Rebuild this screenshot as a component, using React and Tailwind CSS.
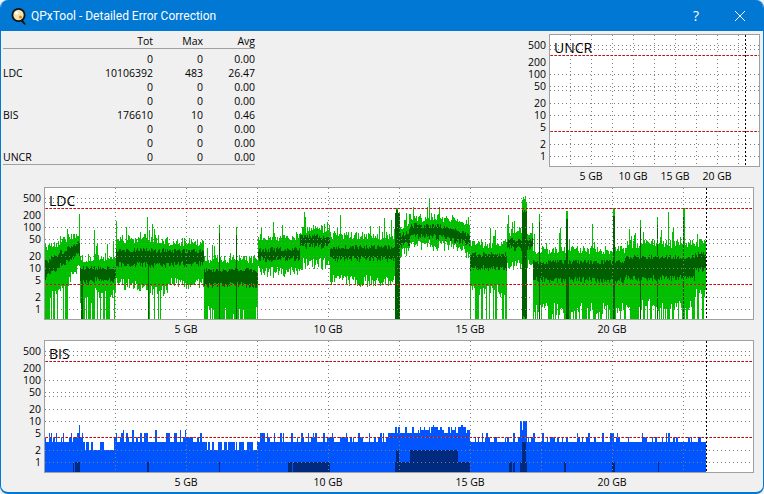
import React from "react";

const FONT = "font-['Open_Sans','Noto_Sans',sans-serif]";
const rng = (seed) => () => {
  seed |= 0; seed = (seed + 0x6d2b79f5) | 0;
  let t = Math.imul(seed ^ (seed >>> 15), 1 | seed);
  t = (t + Math.imul(t ^ (t >>> 7), 61 | t)) ^ t;
  return ((t ^ (t >>> 14)) >>> 0) / 4294967296;
};
const rel = (v) => 122 - 41 * Math.log10(v);
const H_LINES = [500, 400, 100, 50, 40, 20, 10, 2, 1].map((v) => Math.round(rel(v)));
const RED_LINES = [21, 97];
const TICKS = [500, 200, 100, 50, 20, 10, 5, 2, 1];

// x0,x1, lightTop a/b, darkTop a/b, darkBot a/b, lightBot a/b, deep probability
const GREEN = [
  [45, 68, 248, 238, 262, 248, 277, 260, 296, 280, 0.55],
  [68, 80, 238, 231, 248, 241, 260, 253, 280, 268, 0.0],
  [80, 95, 258, 258, 268, 268, 282, 282, 300, 300, 0.7],
  [95, 116, 257, 257, 268, 268, 280, 280, 294, 294, 0.45],
  [116, 147, 240, 238, 250, 250, 265, 264, 284, 286, 0.03],
  [147, 168, 238, 241, 250, 251, 265, 266, 290, 290, 0.1],
  [168, 204, 242, 242, 251, 251, 264, 264, 284, 284, 0],
  [204, 258, 259, 259, 270, 270, 285, 285, 310, 310, 0.75],
  [258, 300, 238, 236, 250, 249, 260, 259, 272, 272, 0],
  [300, 330, 230, 228, 237, 236, 246, 246, 264, 264, 0],
  [330, 395, 236, 236, 247, 247, 259, 259, 281, 281, 0.02],
  [395, 400, 212, 212, 212, 212, 319, 319, 319, 319, 1],
  [400, 410, 226, 222, 235, 231, 246, 243, 254, 250, 0],
  [410, 450, 218, 217, 225, 227, 236, 238, 244, 247, 0],
  [450, 470, 219, 226, 228, 235, 240, 244, 247, 255, 0],
  [470, 507, 244, 244, 254, 254, 268, 268, 291, 291, 0.4],
  [507, 522, 232, 232, 240, 240, 248, 248, 265, 265, 0],
  [522, 527, 200, 200, 212, 212, 319, 319, 319, 319, 1],
  [527, 533, 232, 232, 240, 240, 248, 248, 262, 262, 0],
  [533, 625, 250, 250, 262, 262, 280, 280, 309, 309, 0.5],
  [625, 695, 244, 244, 257, 257, 278, 278, 305, 305, 0.4],
  [695, 706, 243, 243, 254, 254, 270, 270, 295, 295, 0.2],
];
const SPIKES = [
  [60, 236], [79, 214], [94, 230], [147, 217], [219, 225], [236, 227], [340, 215], [384, 218],
  [508, 215], [539, 214], [566, 211], [567, 211], [613, 208], [614, 208], [640, 220], [657, 217],
  [668, 212], [683, 208], [684, 208], [672, 232], [690, 240], [560, 228], [592, 224],
];
const DARK_COLS = [81, 82, 148, 219, 236, 539, 566, 567, 568, 613, 614, 640, 657, 683];

function greenPaths() {
  const r = rng(7);
  const lerp = (a, b, t) => a + (b - a) * t;
  let light = "", dark = "";
  const sp = new Map(SPIKES);
  for (const s of GREEN) {
    for (let x = s[0]; x < s[1]; x++) {
      const t = (x - s[0]) / (s[1] - s[0]);
      let lt = lerp(s[2], s[3], t) + (r() - 0.5) * 9 - 187;
      const dt = lerp(s[4], s[5], t) + (r() - 0.5) * 5 - 187;
      const db = lerp(s[6], s[7], t) + (r() - 0.5) * 6 - 187;
      let lb = lerp(s[8], s[9], t) + (r() - 0.5) * 12 - 187;
      if (r() < s[10]) lb = 132;
      if (sp.has(x)) lt = sp.get(x) - 187;
      else if (r() < 0.08 && s[10] < 1) lt -= 4 + r() * 12;
      light += `M${x + 0.5} ${lt.toFixed(0)}V${lb.toFixed(0)}`;
      const dk = DARK_COLS.includes(x);
      dark += `M${x + 0.5} ${(dk && sp.has(x) ? lt + 8 : dt).toFixed(0)}V${(dk ? 132 : db).toFixed(0)}`;
    }
  }
  return { light, dark };
}

const BLUE = [
  [45, 84, 3, 0.45, [4, 4, 5]], [84, 114, 2, 0.45, [3]], [114, 205, 3, 0.48, [4, 4, 5, 5, 6]],
  [205, 258, 2, 0.5, [3]], [258, 395, 3, 0.45, [4, 4, 5, 5]], [395, 470, 5, 0.6, [6, 6, 7, 7, 8]],
  [470, 520, 3, 0.35, [4, 4, 5]], [520, 527, 6, 0.6, [8, 10]], [527, 706, 3, 0.38, [3, 4, 4, 4, 5]],
];
const NAVY = [
  [73, 74, 1], [75, 80, 1], [147, 149, 1], [219, 220, 1], [288, 292, 1], [293, 330, 1], [395, 470, 1],
  [396, 399, 2], [410, 458, 2], [509, 512, 1], [513, 515, 1], [520, 527, 1], [522, 526, 3], [564, 566, 1], [612, 615, 1], [658, 659, 1],
];
function bluePaths() {
  const r = rng(21);
  let blue = "", navy = "";
  let x = 45;
  const peak = { 79: 8 };
  for (const s of BLUE) {
    x = s[0];
    while (x < s[1]) {
      const w = 1 + Math.floor(r() * 2);
      let v = s[2];
      if (r() < s[3]) v = s[4][Math.floor(r() * s[4].length)];
      for (let i = 0; i < w && x < s[1]; i++, x++) {
        const val = peak[x] || v;
        blue += `M${x + 0.5} ${Math.round(rel(val))}V132`;
      }
    }
  }
  for (const n of NAVY) {
    for (let i = n[0]; i < n[1]; i++) navy += `M${i + 0.5} ${Math.round(rel(n[2]))}V132`;
  }
  return { blue, navy };
}
const G = greenPaths();
const B = bluePaths();

function Grid({ vx, black, x0, w }) {
  const x1 = x0 + w;
  return (
    <g shapeRendering="crispEdges" fill="none">
      {vx.map((x) => <path key={x} d={`M${x + 0.5} 1V132`} stroke="#808080" strokeDasharray="1 3" />)}
      {H_LINES.map((y) => <path key={y} d={`M${x0} ${y + 0.5}H${x1}`} stroke="#808080" strokeDasharray="1 3" />)}
      {RED_LINES.map((y) => (
        <g key={y}>
          <path d={`M${x0} ${y + 0.5}H${x1}`} stroke="#808080" strokeDasharray="1 3" />
          <path d={`M${x0 + 1} ${y + 0.5}H${x1}`} stroke="#e80000" strokeDasharray="2 2" />
        </g>
      ))}
      <path d={`M${black + 0.5} 1V132`} stroke="#000" strokeDasharray="2 2" />
    </g>
  );
}

function YAxis({ width }) {
  return (
    <div className="relative h-[133px] shrink-0 text-[10.5px] leading-[11px] text-black" style={{ width }}>
      {TICKS.map((v) => (
        <span key={v} className="absolute right-[3px]" style={{ top: Math.round(rel(v)) - 5 }}>{v}</span>
      ))}
    </div>
  );
}

function XAxis({ labels, step, pad }) {
  return (
    <div className="flex h-[20px] items-center text-[10.5px] text-black" style={{ paddingLeft: pad }}>
      {labels.map((l) => (
        <span key={l} className="text-center" style={{ width: step }}>{l}</span>
      ))}
    </div>
  );
}

function Chart({ title, x0, w, vx, black, children }) {
  return (
    <div className="relative h-[133px] border border-[#a0a0a0] bg-white" style={{ width: w + 2 }}>
      <svg width={w} height={131} viewBox={`${x0} 1 ${w} 131`} className="block">
        {children}
        <Grid vx={vx} black={black} x0={x0} w={w} />
      </svg>
      <span className="absolute left-[4px] top-[3px] text-[14px] leading-[20px] text-black">{title}</span>
    </div>
  );
}

const ROWS = [
  ["", "0", "0", "0.00"], ["LDC", "10106392", "483", "26.47"], ["", "0", "0", "0.00"], ["", "0", "0", "0.00"],
  ["BIS", "176610", "10", "0.46"], ["", "0", "0", "0.00"], ["", "0", "0", "0.00"], ["UNCR", "0", "0", "0.00"],
];
const COLS = "grid grid-cols-[50px_100px_50px_52px] h-[14px] items-center leading-[14px]";

function Stats() {
  return (
    <div className="w-[252px] text-[10.5px] text-black">
      <div className={`${COLS} mt-[3px] text-right`}>
        <span /><span>Tot</span><span>Max</span><span>Avg</span>
      </div>
      <div className="h-[1px] bg-[#a0a0a0]" />
      <div className="pt-[3px]">
        {ROWS.map((r, i) => (
          <div key={i} className={COLS}>
            <span>{r[0]}</span>
            <span className="text-right">{r[1]}</span>
            <span className="text-right">{r[2]}</span>
            <span className="text-right">{r[3]}</span>
          </div>
        ))}
      </div>
      <div className="h-[1px] bg-[#a0a0a0]" />
    </div>
  );
}

const VX_MAIN = [115, 186, 257, 328, 399, 470, 541, 612, 683];
const VX_UNCR = [570, 591, 612, 633, 654, 675, 696, 717, 738];
const GB_MAIN = ["5 GB", "10 GB", "15 GB", "20 GB"];

export default function App() {
  return (
    <div className={`h-[494px] w-[764px] overflow-hidden bg-[#eef1f4] ${FONT}`}>
      <div className="flex h-full flex-col overflow-hidden rounded-[8px] border-x-[1px] border-b-[2px] border-[#0078d4] bg-[#f0f0f0]">
        <div className="flex h-[31px] shrink-0 items-center bg-[#0078d4] pl-[9px] text-white">
          <svg width="18" height="18" viewBox="0 0 18 18" className="shrink-0">
            <path d="M11 14l3 3.5h2L13 13z" fill="#111" />
            <circle cx="8.5" cy="8" r="7" fill="#111" />
            <circle cx="8.5" cy="8" r="5.2" fill="#f3e3b0" />
            <circle cx="6.6" cy="6" r="1.7" fill="#fff" />
            <circle cx="10.5" cy="10" r="1.6" fill="#d09030" />
          </svg>
          <span className="ml-[3px] font-['Roboto',sans-serif] text-[12px]">QPxTool - Detailed Error Correction</span>
          <span className="ml-auto text-[14px]">?</span>
          <svg width="12" height="12" viewBox="0 0 12 12" className="ml-[35px] mr-[17px]" stroke="#fff" fill="none">
            <path d="M1 1l10 10M11 1L1 11" />
          </svg>
        </div>

        <div className="flex items-start justify-between pl-[2px] pr-[3px] pt-[3px]">
          <div className="-mt-[3px]"><Stats /></div>
          <div>
            <div className="flex">
              <YAxis width={30} />
              <Chart title="UNCR" x0={550} w={209} vx={VX_UNCR} black={745} />
            </div>
            <div className="pl-[30px]">
              <XAxis labels={GB_MAIN} step={42} pad={21} />
            </div>
          </div>
        </div>

        <div className="ml-[1px] flex flex-col">
          <div className="flex">
            <YAxis width={42} />
            <Chart title="LDC" x0={45} w={708} vx={VX_MAIN} black={706}>
              <g shapeRendering="crispEdges" fill="none">
                <path d={G.light} stroke="#00c000" />
                <path d={G.dark} stroke="#006000" />
              </g>
            </Chart>
          </div>
          <div className="pl-[42px]"><XAxis labels={GB_MAIN} step={142} pad={71} /></div>
          <div className="flex">
            <YAxis width={42} />
            <Chart title="BIS" x0={45} w={708} vx={VX_MAIN} black={706}>
              <g shapeRendering="crispEdges" fill="none">
                <path d={B.blue} stroke="#0055ff" />
                <path d={B.navy} stroke="#002a80" />
              </g>
            </Chart>
          </div>
          <div className="pl-[42px]"><XAxis labels={GB_MAIN} step={142} pad={71} /></div>
        </div>
      </div>
    </div>
  );
}
